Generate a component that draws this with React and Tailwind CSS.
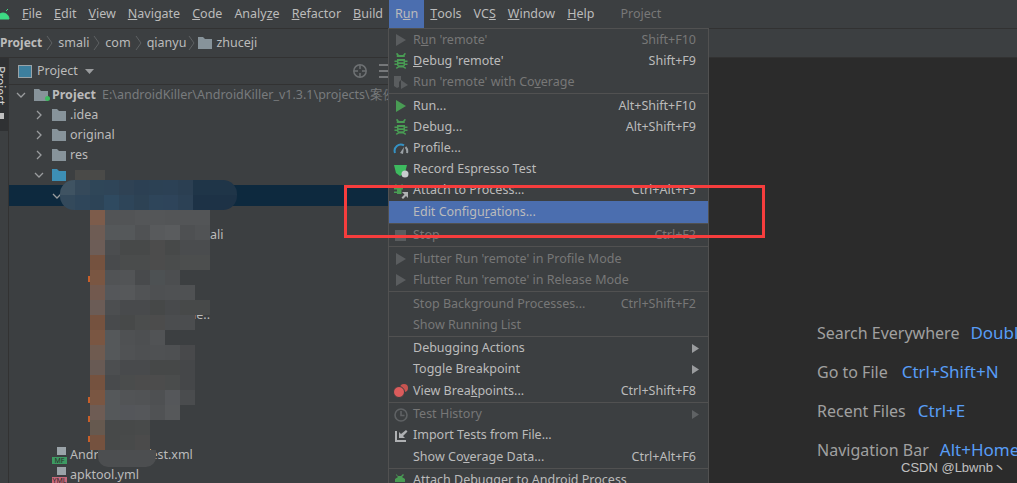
import React from 'react';

const menus = [
  [<><u>F</u>ile</>], [<><u>E</u>dit</>], [<><u>V</u>iew</>], [<><u>N</u>avigate</>], [<><u>C</u>ode</>],
  [<>Analy<u>z</u>e</>], [<><u>R</u>efactor</>], [<><u>B</u>uild</>], [<>R<u>u</u>n</>, true],
  [<><u>T</u>ools</>], [<>VC<u>S</u></>], [<><u>W</u>indow</>], [<><u>H</u>elp</>],
];

const Play = ({ c = '#499c54' }) => (
  <svg width="16" height="16" viewBox="0 0 16 16"><path d="M3 2l10 6-10 6z" fill={c} /></svg>
);
const Bug = ({ c = '#499c54' }) => (
  <svg width="16" height="16" viewBox="0 0 16 16">
    <path d="M3 0.500l1.500-0.500 1.500 2h4l1.500-2 1.500 0.500-1.500 2.500 0.500 1H3.500l0.500-1z" fill={c} />
    <path d="M4 6h8v1.500h2.500v1.500H12v1.500h2.500V12H12v0.500l-1 1 2 1-0.500 1.500-2.500-1.500H6L3.500 16 3 14.500l2-1-1-1V12H1.500v-1.500H4V9H1.500V7.500H4z" fill={c} />
    <rect x="5.500" y="8" width="5" height="1.300" fill="#3c3f41" />
    <rect x="5.500" y="11" width="5" height="1.300" fill="#3c3f41" />
  </svg>
);
const Coverage = () => (
  <svg width="16" height="16" viewBox="0 0 16 16">
    <path d="M1 2h7v4l-2 2v5l-2 1-3-2z" fill="#5a5d5f" />
    <path d="M8 6l7 5-7 4z" fill="#5a5d5f" />
  </svg>
);
const Gauge = () => (
  <svg width="16" height="16" viewBox="0 0 16 16" fill="none">
    <path d="M2 13a6.300 6.300 0 0 1 9-7.600" stroke="#3592c4" strokeWidth="2" />
    <path d="M12.500 7a6.300 6.300 0 0 1 1.500 6" stroke="#9aa0a4" strokeWidth="2" />
    <path d="M7 13l4-6-1 7z" fill="#9aa0a4" />
  </svg>
);
const Espresso = () => (
  <svg width="16" height="16" viewBox="0 0 16 16">
    <path d="M1 3h13l-2 8-5 3-4-3z" fill="#3dba5f" />
    <circle cx="12" cy="12" r="3.500" fill="#c8ccce" />
  </svg>
);
const AttachBug = () => (
  <svg width="16" height="16" viewBox="0 0 16 16">
    <path d="M3 1l1.500 2h3L9 1l1 1-1.500 2v7H4V4L2 2zM1 5h3v1.500H1zM1 8.500h3V10H1zM7 5h3v1.500H7z" fill="#499c54" />
    <path d="M9 9h6v6l-2-2-3 3-1.500-1.500 3-3z" fill="#afb1b3" />
  </svg>
);
const Stop = () => <span className="block w-[11px] h-[11px] ml-[2px] bg-[#5a5d5f]" />;
const Clock = () => (
  <svg width="16" height="16" viewBox="0 0 16 16" fill="none" stroke="#5f6264" strokeWidth="1.600">
    <circle cx="8" cy="8" r="6" /><path d="M8 4v4.500h3.500" />
  </svg>
);
const ImportIcon = () => (
  <svg width="16" height="16" viewBox="0 0 16 16">
    <path d="M2 3h2v9h9v2H2z" fill="#afb1b3" />
    <path d="M13 2l1.500 1.500L10 8l2 2H6V4l2 2z" fill="#afb1b3" />
  </svg>
);
const Breakpoints = () => (
  <svg width="16" height="16" viewBox="0 0 16 16">
    <circle cx="11" cy="5" r="4" fill="#c75450" /><circle cx="6" cy="9" r="5.500" fill="#db5c5c" stroke="#3c3f41" />
  </svg>
);
const AttachDebugger = () => (
  <svg width="16" height="16" viewBox="0 0 16 16">
    <path d="M3 1l2 2h3l2-2 1 1-2 2 3 2v3H2V6l3-2-2-2zM2 10h8v3H2z" fill="#499c54" />
    <path d="M10 10h5v1h-5zM11 12h4v1h-4z" fill="#afb1b3" />
  </svg>
);

const groups = [
  [
    { icon: <Play c="#5a5d5f" />, label: <>R<u>u</u>n 'remote'</>, keys: 'Shift+F10', off: true },
    { icon: <Bug />, label: <><u>D</u>ebug 'remote'</>, keys: 'Shift+F9' },
    { icon: <Coverage />, label: <>Run 'remote' with Co<u>v</u>erage</>, off: true },
  ],
  [
    { icon: <Play />, label: 'Run...', keys: 'Alt+Shift+F10' },
    { icon: <Bug />, label: 'Debug...', keys: 'Alt+Shift+F9' },
    { icon: <Gauge />, label: 'Profile...' },
    { icon: <Espresso />, label: 'Record Espresso Test' },
    { icon: <AttachBug />, label: 'Attach to Process...', keys: 'Ctrl+Alt+F5' },
    { label: <>Edit Configu<u>r</u>ations...</>, active: true },
  ],
  [{ icon: <Stop />, label: 'Stop', keys: 'Ctrl+F2', off: true }],
  [
    { icon: <Play c="#5a5d5f" />, label: "Flutter Run 'remote' in Profile Mode", off: true },
    { icon: <Play c="#5a5d5f" />, label: "Flutter Run 'remote' in Release Mode", off: true },
  ],
  [
    { label: 'Stop Background Processes...', keys: 'Ctrl+Shift+F2', off: true },
    { label: 'Show Running List', off: true },
  ],
  [
    { label: 'Debugging Actions', sub: true },
    { label: 'Toggle Breakpoint', sub: true },
    { icon: <Breakpoints />, label: <>View Brea<u>k</u>points...</>, keys: 'Ctrl+Shift+F8' },
  ],
  [
    { icon: <Clock />, label: 'Test History', sub: true, off: true },
    { icon: <ImportIcon />, label: 'Import Tests from File...' },
    { label: <>Show Co<u>v</u>erage Data...</>, keys: 'Ctrl+Alt+F6' },
  ],
  [{ icon: <AttachDebugger />, label: 'Attach Debugger to Android Process' }],
];

const Folder = ({ c = '#87939a' }) => (
  <svg width="14" height="12" viewBox="0 0 14 12"><path d="M0 0h5l2 2h7v10H0z" fill={c} /></svg>
);

const Chevron = ({ open }) => (
  <svg width="10" height="10" viewBox="0 0 10 10" fill="none" stroke="#9a9c9e" strokeWidth="1.300">
    {open ? <path d="M1 3l4 4 4-4" /> : <path d="M3 1l4 4-4 4" />}
  </svg>
);

const FileTag = ({ tag, c }) => (
  <span className="relative block w-[15px] h-[17px]">
    <span className="absolute right-[1px] top-0 w-[9px] h-[8px] bg-[#9aa3a8]" />
    <span className={`absolute left-0 bottom-0 w-[15px] h-[7px] text-[7px] leading-[7px] text-center text-[#2b2b2b] ${c}`}>{tag}</span>
  </span>
);

const Crumb = ({ tight }) => (
  <svg width="8" height="16" viewBox="0 0 8 16" fill="none" stroke="#5e6163" className={tight ? 'mx-[2px]' : 'mx-[4px]'}><path d="M1 1l5 7-5 7" /></svg>
);

// mosaic that hides part of the tree
const band = [
  ['#3f5362', '#35495a', '#2f4658', '#2f4558', '#2f4254', '#2c4053', '#2c4154', '#2c4155', '#2b3f52', '#1f3548', '#1f3548', '#1f3548'],
  ['#33495b', '#2f465a', '#2d4457', '#2f4a60', '#2e4559', '#2d4254', '#2e455a', '#2e445a', '#2c4155', '#1d3246', '#1d3246', '#1d3246'],
];
const mosaic = [
  ['#7d5c4b', '#525456', '#525456', '#545658', '#545658', '#535557', '#535557', '#535557'],
  ['#6e5c54', '#55585a', '#55585a', '#505254', '#585a5c', '#5a5c5e', '#4e5052', '#515355'],
  ['#6d5d57', '#4b4d4f', '#474949', '#474949', '#4c4c4c', '#474949', '#4a4c4e', '#4a4c4e'],
  ['#75523f', '#484a4c', '#4a4c4c', '#4a4c4c', '#4c4c4c', '#4a4c4c', '#4c4e4e', '#4c4e4e'],
  ['#7a5642', '#515355', '#525456', '#484a4c', '#4d5153', '#4c4e50'],
  ['#72594e', '#55575a', '#56585a', '#515355', '#4e5052', '#4f5153', '#4f5153'],
  ['#6b5c56', '#4c4e50', '#484a4c', '#484a4c', '#464848', '#484a4c', '#474949', '#474949'],
  ['#75523f', '#484a4c', '#474949', '#4b4d4d', '#4c4c4c', '#4b4d4f', '#4b4d4f'],
  ['#7a5642', '#55585a', '#4f5153', '#4d4f51', '#515355'],
  ['#6f5b50', '#55585a', '#505254', '#4e5052', '#4f5153', '#4e5052', '#48494b'],
  ['#685a54', '#4c4e50', '#484a4c', '#484a4c', '#464848', '#464848', '#454749'],
  ['#75523f', '#484a4c', '#4a4c4c', '#4c4c4c', '#4c4c4c', '#4a4c4c', '#454749'],
  ['#7a5642', '#55585a', '#525456', '#515355', '#4e5052', '#55575a', '#4a4c4e'],
  ['#6e5c54', '#55585a', '#54565a', '#55575a', '#505254', '#56585a'],
  ['#66594f', '#474949', '#474949', '#484a4a'],
  ['#75523f', '#474949', '#484a4a', '#4b4b4b'],
];

const tips = [
  { name: 'Search Everywhere', keys: 'Double Shift', gap: 'ml-[11px]' },
  { name: 'Go to File', keys: 'Ctrl+Shift+N', gap: 'ml-[14px]' },
  { name: 'Recent Files', keys: 'Ctrl+E', gap: 'ml-[12px]' },
  { name: 'Navigation Bar', keys: 'Alt+Home', gap: 'ml-[11px]' },
];

function MenuRow({ item }) {
  const text = item.off ? 'text-[#777777]' : 'text-[#bbbbbb]';
  return (
    <div className={`flex items-center h-[21.2px] pl-[3px] pr-[12px] ${text} ${item.active ? 'bg-[#4b6eaf]' : ''}`}>
      <span className="flex items-center w-[21px] shrink-0 pl-[1px]">{item.icon}</span>
      <span className="flex-1 whitespace-nowrap">{item.label}</span>
      {item.keys && <span className="whitespace-nowrap">{item.keys}</span>}
      {item.sub && (
        <svg width="7" height="9" viewBox="0 0 7 9" className="mr-[-3px]">
          <path d="M0 0l7 4.500-7 4.500z" fill={item.off ? '#5f6264' : '#9a9c9e'} />
        </svg>
      )}
    </div>
  );
}

export default function App() {
  return (
    <div className="relative w-[1017px] h-[483px] overflow-hidden flex flex-col bg-[#3c3f41] text-[12.5px] text-[#bbbbbb] font-['Noto_Sans',sans-serif]">
      {/* menu bar */}
      <div className="flex items-stretch h-[28px] shrink-0 pl-[16px]">
        {menus.map(([label, on], i) => (
          <span key={i} className={`flex items-center px-[6px] pt-[1px] ${on ? 'bg-[#4b6eaf]' : ''}`}>{label}</span>
        ))}
        <span className="flex items-center ml-[20px] text-[#787878]">Project</span>
        <svg width="10" height="12" viewBox="0 0 10 12" className="absolute left-0 top-[8px]">
          <path d="M-3 11a6 6 0 0 1 12 0zM6 3l2-2" fill="#3ddc84" stroke="#3ddc84" />
        </svg>
      </div>

      {/* breadcrumbs */}
      <div className="flex items-center h-[30px] shrink-0 border-y border-[#323232]">
        <b className="font-bold text-[12px]">Project</b>
        <Crumb />
        <span>smali</span>
        <Crumb />
        <span>com</span>
        <Crumb />
        <span>qianyu</span>
        <Crumb tight />
        <span className="mr-[4px]"><Folder /></span>
        <span>zhuceji</span>
      </div>

      <div className="flex flex-1 min-h-0">
        {/* tool stripe */}
        <div className="w-[9px] shrink-0 border-r border-[#323232]">
          <div className="h-[73px] bg-[#2f3133] overflow-hidden relative">
            <span className="absolute left-[-6px] top-[8px] [writing-mode:vertical-rl] text-[12px] leading-[12px] text-[#d0d0d0]">Project</span>
            <span className="absolute left-0 top-[55px] w-[4px] h-[6px] bg-[#c0c0c0]" />
          </div>
        </div>

        {/* project panel */}
        <div className="w-[699px] shrink-0 flex flex-col">
          <div className="flex items-center h-[27px] shrink-0 pl-[9px] border-b border-[#323232]">
            <span className="block w-[14px] h-[13px] border border-[#9aa3a8] bg-[#3d7f9e] mr-[5px]" />
            <span>Project</span>
            <svg width="9" height="5" viewBox="0 0 9 5" className="ml-[7px]"><path d="M0 0h9L4.500 5z" fill="#9a9c9e" /></svg>
            <svg width="16" height="16" viewBox="0 0 16 16" fill="none" stroke="#6e7173" strokeWidth="1.500" className="ml-[258px]">
              <circle cx="8" cy="8" r="6.200" /><path d="M8 2v4M8 10v4M2 8h4M10 8h4" />
            </svg>
            <svg width="10" height="14" viewBox="0 0 10 14" fill="none" stroke="#afb1b3" className="ml-[11px]"><path d="M0 1h10M0 7h10M0 13h10" /></svg>
          </div>

          <div className="flex flex-col">
            <div className="flex items-center h-[20px] pl-[7px]">
              <Chevron open />
              <span className="relative ml-[8px] mr-[4px]">
                <Folder />
                <span className="absolute right-[-2px] bottom-0 w-[5px] h-[5px] rounded-full bg-[#3dba5f]" />
              </span>
              <b className="font-bold mr-[6px]">Project</b>
              <span className="text-[#787b7d] whitespace-nowrap">{'E:\\androidKiller\\AndroidKiller_v1.3.1\\projects\\案例'}</span>
            </div>
            {['.idea', 'original', 'res'].map((name) => (
              <div key={name} className="flex items-center h-[20px] pl-[25px]">
                <Chevron />
                <span className="ml-[8px] mr-[4px]"><Folder /></span>
                <span>{name}</span>
              </div>
            ))}
            <div className="flex items-center h-[20px] pl-[25px]">
              <Chevron open />
              <span className="ml-[8px]"><Folder c="#3d8fb5" /></span>
            </div>
            <div className="flex items-center h-[21px] pl-[43px] bg-[#0d293e]">
              <Chevron open />
            </div>
            <div className="h-[19px]" />
            <div className="h-[20px] pl-[201px] leading-[20px]">ali</div>
            <div className="h-[20px] pl-[198px] pt-[10px]"><span className="block w-[1px] h-[5px] bg-[#b0ad90]" /></div>
            <div className="h-[20px] pl-[79px] pt-[11px]"><span className="block w-[4px] h-[6px] bg-[#c75f2a]" /></div>
            <div className="h-[20px]" />
            <div className="h-[20px] pl-[184px] leading-[20px]">le..</div>
            <div className="h-[60px]" />
            <div className="h-[20px] pl-[79px] pt-[12px]"><span className="block w-[4px] h-[6px] bg-[#c75f2a]" /></div>
            <div className="h-[20px] pl-[79px] pt-[11px]"><span className="block w-[4px] h-[6px] bg-[#c75f2a]" /></div>
            <div className="h-[20px] pl-[79px] pt-[11px]"><span className="block w-[4px] h-[6px] bg-[#c75f2a]" /></div>
            <div className="flex items-center h-[20px] pl-[43px]">
              <FileTag tag="MF" c="bg-[#3d9a62]" />
              <span className="ml-[3px]">AndroidManifest.xml</span>
            </div>
            <div className="flex items-center h-[20px] pl-[43px]">
              <FileTag tag="YML" c="bg-[#c7687a]" />
              <span className="ml-[3px]">apktool.yml</span>
            </div>
          </div>
        </div>

        {/* editor placeholder */}
        <div className="flex-1 bg-[#2b2b2b] pl-[109px] pt-[264px] flex flex-col gap-[17px] text-[16px] leading-[22px] text-[#a0a0a0] whitespace-nowrap">
          {tips.map((tip) => (
            <div key={tip.name}>
              {tip.name}<span className={`${tip.gap} text-[17px] text-[#589df6]`}>{tip.keys}</span>
            </div>
          ))}
          <div>Drop files here to open</div>
        </div>
      </div>

      {/* mosaic over the tree */}
      <div className="absolute left-[75px] top-[170px] w-[30px] h-[15px] bg-[#4a4a48]" />
      <div className="absolute left-[60px] top-[180px] w-[177px] h-[30px] rounded-[14px] overflow-hidden flex flex-col">
        {band.map((row, r) => (
          <div key={r} className="flex">
            {row.map((c, i) => <span key={i} className="block w-[15px] h-[15px]" style={{ backgroundColor: c }} />)}
          </div>
        ))}
      </div>
      <div className="absolute left-[90px] top-[210px] flex flex-col">
        {mosaic.map((row, r) => (
          <div key={r} className="flex">
            {row.map((c, i) => <span key={i} className="block w-[15px] h-[15px]" style={{ backgroundColor: c }} />)}
          </div>
        ))}
      </div>
      <div className="absolute left-[98px] top-[450px] w-[58px] h-[17px] rounded-b-[10px] bg-[#4c4e50]" />

      {/* Run menu */}
      <div className="absolute left-[388px] top-[28px] w-[321px] h-[456px] pt-[0.5px] bg-[#3c3f41] border-x border-t border-[#515151]">
        {groups.map((rows, g) => (
          <React.Fragment key={g}>
            {g > 0 && <div className="h-[1px] mb-[1.400px] bg-[#515151]" />}
            {rows.map((item, i) => <MenuRow key={i} item={item} />)}
          </React.Fragment>
        ))}
      </div>

      {/* red annotation */}
      <div className="absolute left-[344px] top-[185px] w-[421px] h-[53px] border-[3px] border-[#f63d3d]" />

      {/* watermark */}
      <span className="absolute left-[901px] top-[460px] text-[13px] leading-[16px] text-[#c0c0c0] font-['Liberation_Sans','Noto_Sans_CJK_SC',sans-serif]">CSDN @Lbwnb丶</span>
    </div>
  );
}
